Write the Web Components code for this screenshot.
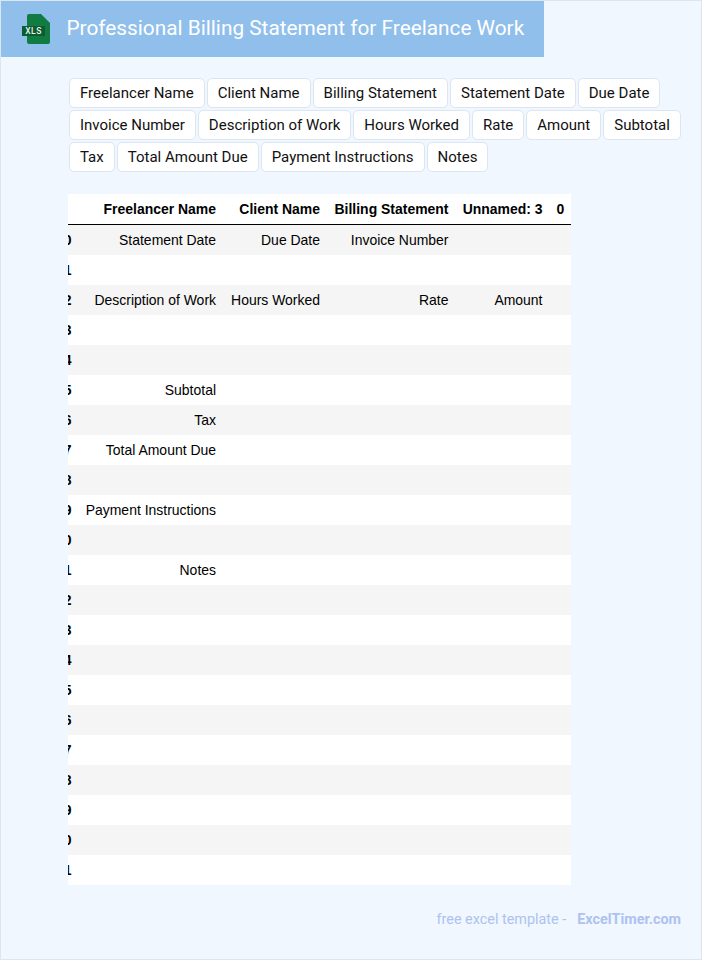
<!DOCTYPE html>
<html lang="en">
<head>
<meta charset="utf-8">
<title>Professional Billing Statement for Freelance Work</title>
<style>
  html, body { margin: 0; padding: 0; }
  body { font-family: Roboto, sans-serif; }
</style>
</head>
<body>
<sheet-page>
  <page-banner>Professional Billing Statement for Freelance Work</page-banner>
  <chip-list>
    <field-chip>Freelancer Name</field-chip>
    <field-chip>Client Name</field-chip>
    <field-chip>Billing Statement</field-chip>
    <field-chip>Statement Date</field-chip>
    <field-chip>Due Date</field-chip>
    <field-chip>Invoice Number</field-chip>
    <field-chip>Description of Work</field-chip>
    <field-chip>Hours Worked</field-chip>
    <field-chip>Rate</field-chip>
    <field-chip>Amount</field-chip>
    <field-chip>Subtotal</field-chip>
    <field-chip>Tax</field-chip>
    <field-chip>Total Amount Due</field-chip>
    <field-chip>Payment Instructions</field-chip>
    <field-chip>Notes</field-chip>
  </chip-list>
  <data-sheet></data-sheet>
  <page-footer></page-footer>
</sheet-page>

<script>
class SheetPage extends HTMLElement {
  constructor() {
    super();
    const shadow = this.attachShadow({ mode: "open" });
    shadow.innerHTML = `
      <style>
        :host {
          display: flex;
          flex-direction: column;
          box-sizing: border-box;
          width: 702px;
          height: 960px;
          overflow: hidden;
          background: #f0f7ff;
          border: 1px solid #dce6f2;
        }
      </style>
      <slot></slot>
    `;
  }
}

class PageBanner extends HTMLElement {
  constructor() {
    super();
    const shadow = this.attachShadow({ mode: "open" });
    shadow.innerHTML = `
      <style>
        :host {
          display: flex;
          align-items: center;
          box-sizing: border-box;
          width: 543px;
          height: 56px;
          padding: 0 0 2px 21px;
          background: #90bfec;
          color: #fff;
          font: 20.8px Roboto, sans-serif;
        }
        svg { display: block; flex: none; margin: 2px 15.5px 0 0; }
        text { font: 500 8.5px Roboto, sans-serif; letter-spacing: .5px; fill: #e8f3ec; }
      </style>
      <svg width="29" height="32" viewBox="0 0 29 32">
        <path d="M7 1h12l9 9v19a2 2 0 0 1-2 2H7a2 2 0 0 1-2-2V3a2 2 0 0 1 2-2z" fill="#107c41"/>
        <rect x="0" y="13" width="23" height="10" fill="#0b5c30"/>
        <text x="11.500" y="21" text-anchor="middle">XLS</text>
      </svg>
      <slot></slot>
    `;
  }
}

class ChipList extends HTMLElement {
  constructor() {
    super();
    const shadow = this.attachShadow({ mode: "open" });
    shadow.innerHTML = `
      <style>
        :host {
          display: flex;
          flex-wrap: wrap;
          gap: 2px;
          margin: 21px 0 22px 68px;
          width: 620px;
        }
      </style>
      <slot></slot>
    `;
  }
}

class FieldChip extends HTMLElement {
  constructor() {
    super();
    const shadow = this.attachShadow({ mode: "open" });
    shadow.innerHTML = `
      <style>
        :host {
          display: block;
          box-sizing: border-box;
          height: 30px;
          padding: 0 10px;
          background: #fff;
          border: 1px solid #dce6f2;
          border-radius: 5px;
          color: #111;
          font: 15px/28px Roboto, sans-serif;
          white-space: nowrap;
        }
      </style>
      <slot></slot>
    `;
  }
}

class DataSheet extends HTMLElement {
  constructor() {
    super();
    const shadow = this.attachShadow({ mode: "open" });

    const columns = ["Freelancer Name", "Client Name", "Billing Statement", "Unnamed: 3", "0"];
    const filled = {
      0: ["Statement Date", "Due Date", "Invoice Number"],
      2: ["Description of Work", "Hours Worked", "Rate", "Amount"],
      5: ["Subtotal"],
      6: ["Tax"],
      7: ["Total Amount Due"],
      9: ["Payment Instructions"],
      11: ["Notes"]
    };

    const rows = [];
    for (let i = 0; i < 22; i++) {
      const values = filled[i] || [];
      const cells = columns.map((c, n) => `<td>${values[n] || ""}</td>`).join("");
      rows.push(`<tr><th>${i}</th>${cells}</tr>`);
    }

    shadow.innerHTML = `
      <style>
        :host {
          display: block;
          width: 503px;
          margin-left: 67px;
          overflow: hidden;
          background: #fff;
        }
        table {
          table-layout: fixed;
          width: 523px;
          margin-left: -20px;
          border-collapse: separate;
          border-spacing: 0;
          color: #000;
          font: 13.96px "Liberation Sans", Arial, sans-serif;
        }
        th, td {
          box-sizing: border-box;
          height: 30px;
          padding: 0 7px;
          text-align: right;
          white-space: nowrap;
          font-weight: normal;
        }
        tbody th { padding-right: 6.5px; }
        th { font-weight: bold; }
        thead th { height: 31px; border-bottom: 1px solid #000; }
        tbody tr:nth-child(odd) { background: #f5f5f5; }
      </style>
      <table>
        <colgroup>
          <col style="width:30px"><col style="width:145px"><col style="width:104px">
          <col style="width:128.5px"><col style="width:94px"><col style="width:21.5px">
        </colgroup>
        <thead>
          <tr><th></th>${columns.map(c => `<th>${c}</th>`).join("")}</tr>
        </thead>
        <tbody>${rows.join("")}</tbody>
      </table>
    `;
  }
}

class PageFooter extends HTMLElement {
  constructor() {
    super();
    const shadow = this.attachShadow({ mode: "open" });
    shadow.innerHTML = `
      <style>
        :host {
          display: flex;
          justify-content: flex-end;
          margin-top: 26px;
          padding-right: 20px;
          color: #aec2f0;
          font: 14.4px/18px Roboto, sans-serif;
        }
        b { margin-left: 11px; font-weight: bold; }
      </style>
      <span>free excel template -</span><b>ExcelTimer.com</b>
    `;
  }
}

customElements.define("sheet-page", SheetPage);
customElements.define("page-banner", PageBanner);
customElements.define("chip-list", ChipList);
customElements.define("field-chip", FieldChip);
customElements.define("data-sheet", DataSheet);
customElements.define("page-footer", PageFooter);
</script>
</body>
</html>
